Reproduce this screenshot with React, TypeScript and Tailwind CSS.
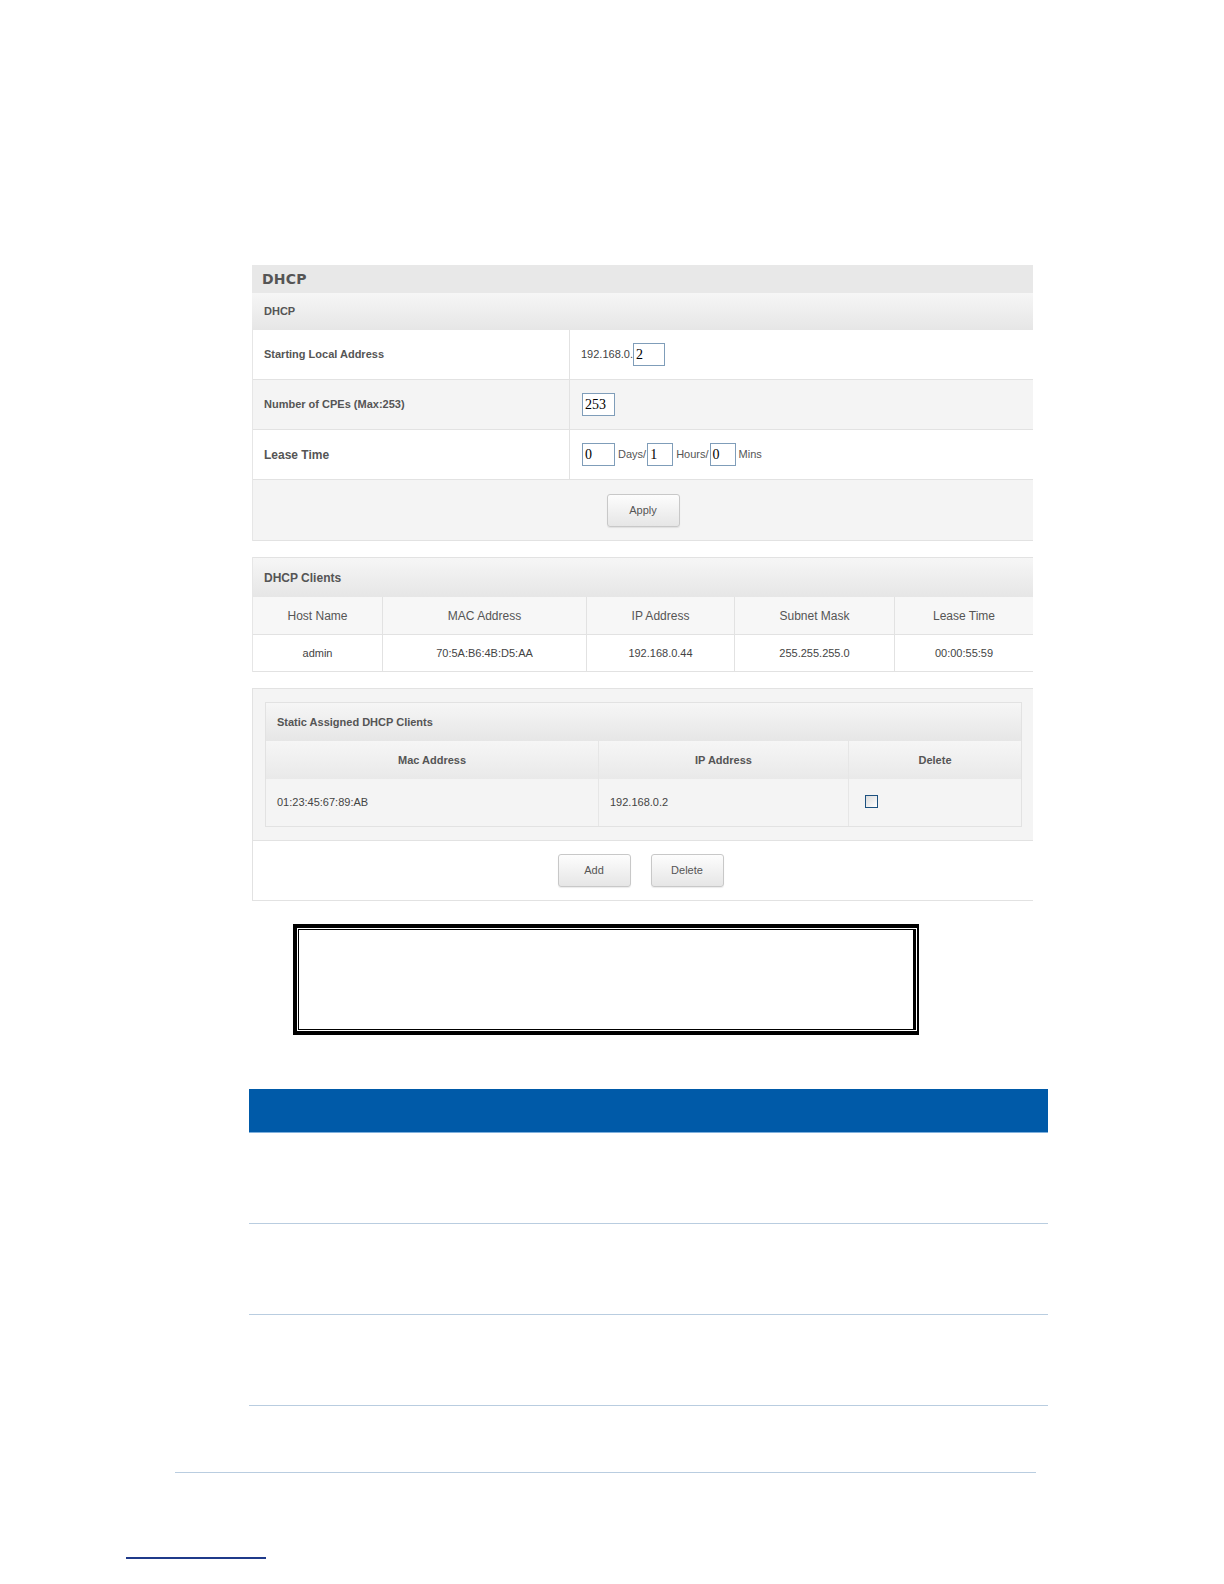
import React from "react";

const font = { fontFamily: '"Liberation Sans", Arial, sans-serif' };

function Input({ value, w }: { value: string; w: string }) {
  return (
    <span
      className={`inline-flex items-center h-[23px] border border-[#7f9db9] bg-white pl-[2px] text-[14px] text-black ${w}`}
      style={{ fontFamily: '"Liberation Serif", "Times New Roman", serif' }}
    >
      {value}
    </span>
  );
}

function Btn({ label }: { label: string }) {
  return (
    <button className="w-[73px] h-[33px] rounded-[3px] border border-[#c8c8c8] bg-gradient-to-b from-[#fdfdfd] to-[#e6e6e6] text-[11px] text-[#555] shadow-[0_1px_1px_rgba(0,0,0,0.08)]">
      {label}
    </button>
  );
}

export default function App() {
  return (
    <div className="relative w-full h-[1570px] overflow-hidden bg-white" style={font}>
      <div className="pt-[265px]">
        {/* DHCP panel */}
        <div className="ml-[252px] w-[781px]">
          <div className="h-[28px] bg-[#e8e8e8] flex items-center pl-[10px] text-[14px] text-[#555]" style={{ fontFamily: '"DejaVu Sans", Verdana, sans-serif', fontWeight: 600 }}>
            <span className="tracking-[0.2px]">DHCP</span>
          </div>
          <div className="h-[37px] bg-gradient-to-b from-[#f6f6f6] to-[#e6e6e6] flex items-center pl-[12px] text-[11px] font-bold text-[#555]">
            DHCP
          </div>
          <div className="border-l border-[#e6e6e6]">
            <div className="flex h-[50px] bg-white border-b border-[#e2e2e2]">
              <div className="w-[317px] flex items-center pl-[11px] text-[11px] font-bold text-[#555] border-r border-[#e2e2e2]">Starting Local Address</div>
              <div className="flex-1 flex items-center pl-[11px] text-[11px] text-[#444]">
                192.168.0.<Input value="2" w="w-[32px]" />
              </div>
            </div>
            <div className="flex h-[50px] bg-[#f4f4f4] border-b border-[#e2e2e2]">
              <div className="w-[317px] flex items-center pl-[11px] text-[11px] font-bold text-[#555] border-r border-[#e2e2e2]">Number of CPEs (Max:253)</div>
              <div className="flex-1 flex items-center pl-[12px]">
                <Input value="253" w="w-[33px]" />
              </div>
            </div>
            <div className="flex h-[50px] bg-white border-b border-[#e2e2e2]">
              <div className="w-[317px] flex items-center pl-[11px] text-[12px] font-bold text-[#555] border-r border-[#e2e2e2]">Lease Time</div>
              <div className="flex-1 flex items-center pl-[12px] text-[11px] text-[#555]">
                <Input value="0" w="w-[33px]" />
                <span className="ml-[3px] mr-[1px]">Days/</span>
                <Input value="1" w="w-[26px]" />
                <span className="ml-[3px] mr-[1px]">Hours/</span>
                <Input value="0" w="w-[26px]" />
                <span className="ml-[3px]">Mins</span>
              </div>
            </div>
            <div className="h-[61px] bg-[#f4f4f4] border-b border-[#e2e2e2] flex items-center justify-center">
              <Btn label="Apply" />
            </div>
          </div>
        </div>

        {/* DHCP Clients */}
        <div className="ml-[252px] w-[781px] mt-[16px] border-l border-[#e6e6e6]">
          <div className="h-[40px] border-t border-[#e2e2e2] bg-gradient-to-b from-[#f6f6f6] to-[#e6e6e6] flex items-center pl-[11px] text-[12px] font-bold text-[#555]">
            DHCP Clients
          </div>
          <div className="flex h-[38px] bg-[#f7f7f7] border-b border-[#e2e2e2] text-[12px] text-[#555]">
            <div className="w-[130px] flex items-center justify-center border-r border-[#e2e2e2]">Host Name</div>
            <div className="w-[204px] flex items-center justify-center border-r border-[#e2e2e2]">MAC Address</div>
            <div className="w-[148px] flex items-center justify-center border-r border-[#e2e2e2]">IP Address</div>
            <div className="w-[160px] flex items-center justify-center border-r border-[#e2e2e2]">Subnet Mask</div>
            <div className="flex-1 flex items-center justify-center">Lease Time</div>
          </div>
          <div className="flex h-[37px] bg-white border-b border-[#e2e2e2] text-[11px] text-[#444]">
            <div className="w-[130px] flex items-center justify-center border-r border-[#e2e2e2]">admin</div>
            <div className="w-[204px] flex items-center justify-center border-r border-[#e2e2e2]">70:5A:B6:4B:D5:AA</div>
            <div className="w-[148px] flex items-center justify-center border-r border-[#e2e2e2]">192.168.0.44</div>
            <div className="w-[160px] flex items-center justify-center border-r border-[#e2e2e2]">255.255.255.0</div>
            <div className="flex-1 flex items-center justify-center">00:00:55:59</div>
          </div>
        </div>

        {/* Static Assigned */}
        <div className="ml-[252px] w-[781px] mt-[16px] border-l border-t border-b border-[#e2e2e2]">
          <div className="bg-[#f4f4f4] pt-[13px] pb-[13px] pl-[12px] pr-[11px] border-b border-[#e2e2e2]">
            <div className="border border-[#e2e2e2]">
              <div className="h-[38px] bg-gradient-to-b from-[#f6f6f6] to-[#e6e6e6] flex items-center pl-[11px] text-[11px] font-bold text-[#555]">
                Static Assigned DHCP Clients
              </div>
              <div className="flex h-[38px] bg-gradient-to-b from-[#f6f6f6] to-[#e9e9e9] text-[11px] font-bold text-[#555]">
                <div className="w-[333px] flex items-center justify-center border-r border-[#e6e6e6]">Mac Address</div>
                <div className="w-[250px] flex items-center justify-center border-r border-[#e6e6e6]">IP Address</div>
                <div className="flex-1 flex items-center justify-center">Delete</div>
              </div>
              <div className="flex h-[47px] bg-[#f4f4f4] text-[11px] text-[#444]">
                <div className="w-[333px] flex items-center pl-[11px] border-r border-[#e6e6e6]">01:23:45:67:89:AB</div>
                <div className="w-[250px] flex items-center pl-[11px] border-r border-[#e6e6e6]">192.168.0.2</div>
                <div className="flex-1 flex items-start pt-[16px] pl-[16px]">
                  <span className="block w-[13px] h-[13px] border border-[#1c5180] bg-gradient-to-br from-[#dcdcdc] to-[#ffffff]" />
                </div>
              </div>
            </div>
          </div>
          <div className="h-[59px] bg-white flex items-center justify-center gap-[20px] pr-[5px]">
            <Btn label="Add" />
            <Btn label="Delete" />
          </div>
        </div>

        {/* Double border box */}
        <div className="ml-[293px] mt-[23px] w-[626px] h-[111px] border-l-[4px] border-t-[4px] border-r-[2px] border-b-[4px] border-black p-[1px]">
          <div className="w-full h-full border border-black border-r-[3px]" />
        </div>

        {/* Blue table */}
        <div className="ml-[249px] w-[799px] mt-[54px]">
          <div className="h-[44px] bg-[#005aa8] border-b border-[#7fb0dd]" />
          <div className="h-[91px] border-b border-[#b9cde0]" />
          <div className="h-[91px] border-b border-[#b9cde0]" />
          <div className="h-[91px] border-b border-[#b9cde0]" />
        </div>

        {/* Footer */}
        <div className="ml-[175px] w-[861px] mt-[66px] border-b border-[#b9cde0]" />
        <div className="ml-[126px] w-[140px] mt-[84px] border-b-[2px] border-[#1f3a8a]" />
      </div>
    </div>
  );
}
